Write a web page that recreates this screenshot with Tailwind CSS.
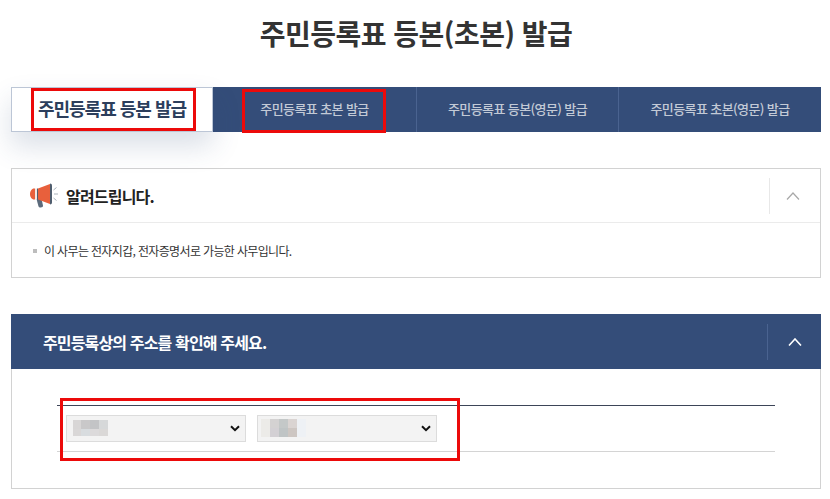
<!DOCTYPE html><html lang="ko">
<head>
  <meta charset="UTF-8" />
  <meta name="viewport" content="width=device-width, initial-scale=1.0"/>
  <title>주민등록표 등본(초본) 발급</title>
  <script src="https://cdn.jsdelivr.net/npm/@tailwindcss/browser@4"></script>
</head>
<body class="bg-white h-[499px] overflow-hidden font-['Noto_Sans_CJK_KR','Noto_Sans',sans-serif]">
  <div class="w-[810px] ml-[11px]">
    <h1 class="h-[87px] pt-[12px] text-center text-[28px] leading-[42px] font-bold tracking-[-0.5px] text-[#333]">주민등록표 등본(초본) 발급</h1>

    <!-- tabs -->
    <div class="flex h-[45px] bg-[#344d79]">
      <a class="relative w-[202px] flex items-center justify-center pb-[3px] bg-white border border-[#bcc6d6] shadow-[0_14px_28px_rgba(51,78,123,0.18)] text-[18px] font-bold tracking-[-1px] text-[#2c3e5c]">
        주민등록표 등본 발급
        <span class="absolute left-[19px] top-0 w-[165px] h-[43px] border-[3px] border-[#ec0a0a]"></span>
      </a>
      <a class="relative w-[203px] flex items-center justify-center pb-[2px] text-[13px] font-medium tracking-[-0.6px] text-[#c3cad6]">
        주민등록표 초본 발급
        <span class="absolute left-[29px] top-[2px] w-[144px] h-[44px] border-[3px] border-[#ec0a0a]"></span>
      </a>
      <a class="w-[202px] flex items-center justify-center pb-[2px] border-l border-[#4a6390] text-[13px] font-medium tracking-[-0.6px] text-[#c3cad6]">주민등록표 등본(영문) 발급</a>
      <a class="flex-1 flex items-center justify-center pb-[2px] border-l border-[#4a6390] text-[13px] font-medium tracking-[-0.6px] text-[#c3cad6]">주민등록표 초본(영문) 발급</a>
    </div>

    <!-- notice -->
    <section class="mt-[36px] h-[110px] border border-[#d2d2d2]">
      <div class="h-[54px] flex items-center border-b border-[#ebebeb]">
        <svg class="ml-[18px] w-[28px] h-[25px]" viewBox="0 0 28 25">
          <path d="M6 14h5l2 8.500c.2 1.200-.8 2-2.300 2-1.200 0-2-.5-2.300-1.500z" fill="#5c6b7c"/>
          <path d="M5 5.500H4C1.800 5.500 0 8 0 11s1.800 5.500 4 5.500h1z" fill="#e8603c"/>
          <path d="M5 5.500h2v11H5z" fill="#f3e6e0"/>
          <path d="M7 5.500h1v11H7z" fill="#4f5d6e"/>
          <path d="M8 5.500L20 1v20L8 16.500z" fill="#e8603c"/>
          <path d="M20 0.500c1.200 0 2 .8 2 2v17c0 1.200-.8 2-2 2z" fill="#4f5d6e"/>
          <path d="M23.500 7l3-2.500M24 11h4M23.500 15l3 2.500" stroke="#aab2ba" stroke-width="1" fill="none"/>
        </svg>
        <h2 class="ml-[8px] text-[16px] font-bold tracking-[-0.8px] text-[#222]">알려드립니다.</h2>
        <div class="ml-auto h-[36px] w-[47px] flex items-center justify-center border-l border-[#e8e8e8] mr-[4px]">
          <svg class="w-[14px] h-[8px]" viewBox="0 0 14 8" fill="none" stroke="#a8a8a8" stroke-width="1.200"><path d="M1 7.500L7 1l6 6.500"/></svg>
        </div>
      </div>
      <p class="flex items-center mt-[18px] ml-[21px] text-[12px] leading-[20px] tracking-[-0.65px] text-[#333]">
        <span class="w-[4px] h-[4px] bg-[#bdbdbd] mr-[7px]"></span>이 사무는 전자지갑, 전자증명서로 가능한 사무입니다.
      </p>
    </section>

    <!-- address -->
    <section class="mt-[36px] h-[175px] border-x border-b border-[#d2d2d2]">
      <div class="-mx-px h-[55px] flex items-center bg-[#344d79]">
        <h2 class="ml-[32px] text-[16px] font-bold tracking-[-0.85px] text-white">주민등록상의 주소를 확인해 주세요.</h2>
        <div class="ml-auto h-[36px] w-[54px] flex items-center justify-center border-l border-[#4a6390]">
          <svg class="w-[14px] h-[8px]" viewBox="0 0 14 8" fill="none" stroke="#fff" stroke-width="1.600"><path d="M1 7.500L7 1l6 6.500"/></svg>
        </div>
      </div>
      <div class="relative mt-[36px] ml-[45px] w-[718px] h-[47px] border-t border-t-[#3d4558] border-b border-b-[#d4d4d4] pt-[9px] pl-[9px] flex gap-[11px]">
        <div class="relative w-[180px] h-[27px] bg-[#f3f3f3] border border-[#dcdcdc]">
          <div class="absolute left-[6px] top-[4px] grid grid-cols-[8px_9px_9px_9px] grid-rows-[9px_7px]">
            <i class="bg-[#d8d6d6]"></i><i class="bg-[#c9c8c9]"></i><i class="bg-[#c3c4c6]"></i><i class="bg-[#d6d8d9]"></i>
            <i class="bg-[#d9d7d7]"></i><i class="bg-[#d8dcdf]"></i><i class="bg-[#dcdadb]"></i><i class="bg-[#dad8d7]"></i>
          </div>
          <svg class="absolute right-[5px] top-[9px] w-[10px] h-[7px]" viewBox="0 0 10 7" fill="none" stroke="#111" stroke-width="2"><path d="M1 1.200l4 4 4-4"/></svg>
        </div>
        <div class="relative w-[180px] h-[27px] bg-[#f3f3f3] border border-[#dcdcdc]">
          <div class="absolute left-[3px] top-[3px] grid grid-cols-[9px_9px_9px_9px_9px] grid-rows-[9px_9px]">
            <i class="bg-[#ecebe8]"></i><i class="bg-[#d4d2d2]"></i><i class="bg-[#c4c8c8]"></i><i class="bg-[#dad4d2]"></i><i class="bg-[#eef1f5]"></i>
            <i class="bg-[#ecebe8]"></i><i class="bg-[#d3d0d4]"></i><i class="bg-[#bfc4c5]"></i><i class="bg-[#cdc6c2]"></i><i class="bg-[#eef1f5]"></i>
          </div>
          <svg class="absolute right-[5px] top-[9px] w-[10px] h-[7px]" viewBox="0 0 10 7" fill="none" stroke="#111" stroke-width="2"><path d="M1 1.200l4 4 4-4"/></svg>
        </div>
        <span class="absolute left-[3px] top-[-8px] w-[400px] h-[63px] border-[3px] border-[#ec0a0a]"></span>
      </div>
    </section>
  </div>
</body>
</html>
